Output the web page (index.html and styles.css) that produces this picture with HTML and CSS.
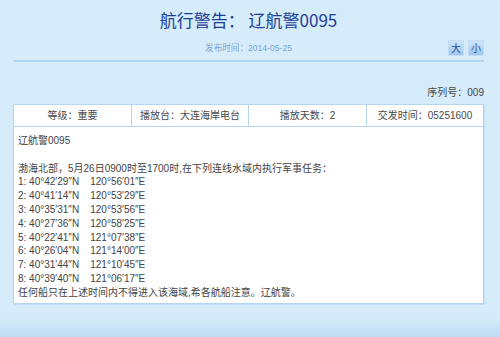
FILE: index.html
```html
<!DOCTYPE html>
<html lang="zh">
<head>
<meta charset="utf-8">
<title>航行警告： 辽航警0095</title>
<link rel="stylesheet" href="styles.css">
</head>
<body>
<div class="page">
  <h1 class="title">航行警告： 辽航警0095</h1>
  <div class="meta">
    <span></span>
    <span class="date">发布时间：2014-05-25</span>
    <div class="sizes"><button class="size-btn">大</button><button class="size-btn">小</button></div>
  </div>
  <div class="rule"></div>
  <div class="serial">序列号：009</div>
  <div class="card">
    <div class="info-row">
      <div class="cell">等级：重要</div>
      <div class="cell">播放台：大连海岸电台</div>
      <div class="cell">播放天数：2</div>
      <div class="cell">交发时间：05251600</div>
    </div>
    <div class="content">辽航警0095

渤海北部，5月26日0900时至1700时,在下列连线水域内执行军事任务：
1: 40°42′29″N    120°56′01″E
2: 40°41′14″N    120°53′29″E
3: 40°35′31″N    120°53′56″E
4: 40°27′36″N    120°58′25″E
5: 40°22′41″N    121°07′38″E
6: 40°26′04″N    121°14′00″E
7: 40°31′44″N    121°10′45″E
8: 40°39′40″N    121°06′17″E
任何船只在上述时间内不得进入该海域,希各航船注意。辽航警。</div>
  </div>
</div>
</body>
</html>
```
FILE: styles.css
```css
html, body {
  margin: 0;
  padding: 0;
}
body {
  width: 500px;
  height: 337px;
  overflow: hidden;
  background: linear-gradient(to bottom, #d6ecfa 0px, #d6ecfa 318px, #bedcf5 337px);
  font-family: "Liberation Sans", "Noto Sans CJK SC", sans-serif;
  color: #444;
}
.page {
  width: 471px;
  margin-left: 13px;
  padding-top: 8px;
}
.title {
  margin: 0;
  font-family: "Noto Sans CJK SC", sans-serif;
  font-weight: normal;
  font-size: 17px;
  line-height: 24px;
  color: #1d3e96;
  text-align: center;
}
.meta {
  margin-top: 8px;
  height: 16px;
  display: grid;
  grid-template-columns: 1fr auto 1fr;
  align-items: center;
}
.date {
  font-size: 8.6px;
  color: #78a6d4;
  line-height: 16px;
}
.sizes {
  justify-self: end;
  display: flex;
  gap: 4px;
}
.size-btn {
  width: 16px;
  height: 16px;
  padding: 0;
  border: 1px solid #c4dcf3;
  background: linear-gradient(to bottom, #cfe4f8, #9fc6ed);
  color: #2a4f9e;
  font-family: "Noto Sans CJK SC", sans-serif;
  font-size: 10px;
  line-height: 14px;
  text-align: center;
}
.rule {
  margin-top: 4px;
  height: 2px;
  background: #b4d6f1;
}
.serial {
  margin-top: 24px;
  line-height: 14px;
  font-size: 10px;
  text-align: right;
  color: #444;
}
.card {
  margin-top: 4px;
  background: #fff;
  border: 1px solid #b6d6f0;
  box-shadow: 1px 1px 0 #c2def4;
}
.info-row {
  display: grid;
  grid-template-columns: 117px 117px 118px 1fr;
  border-bottom: 1px solid #b6d6f0;
}
.cell {
  height: 21px;
  line-height: 21px;
  text-align: center;
  font-size: 10px;
  color: #4a4a4a;
  border-left: 1px solid #b6d6f0;
}
.cell:first-child {
  border-left: none;
}
.content {
  padding: 7px 4px 3px 4px;
  font-size: 10px;
  line-height: 13.8px;
  color: #444;
  white-space: pre-wrap;
}
```
